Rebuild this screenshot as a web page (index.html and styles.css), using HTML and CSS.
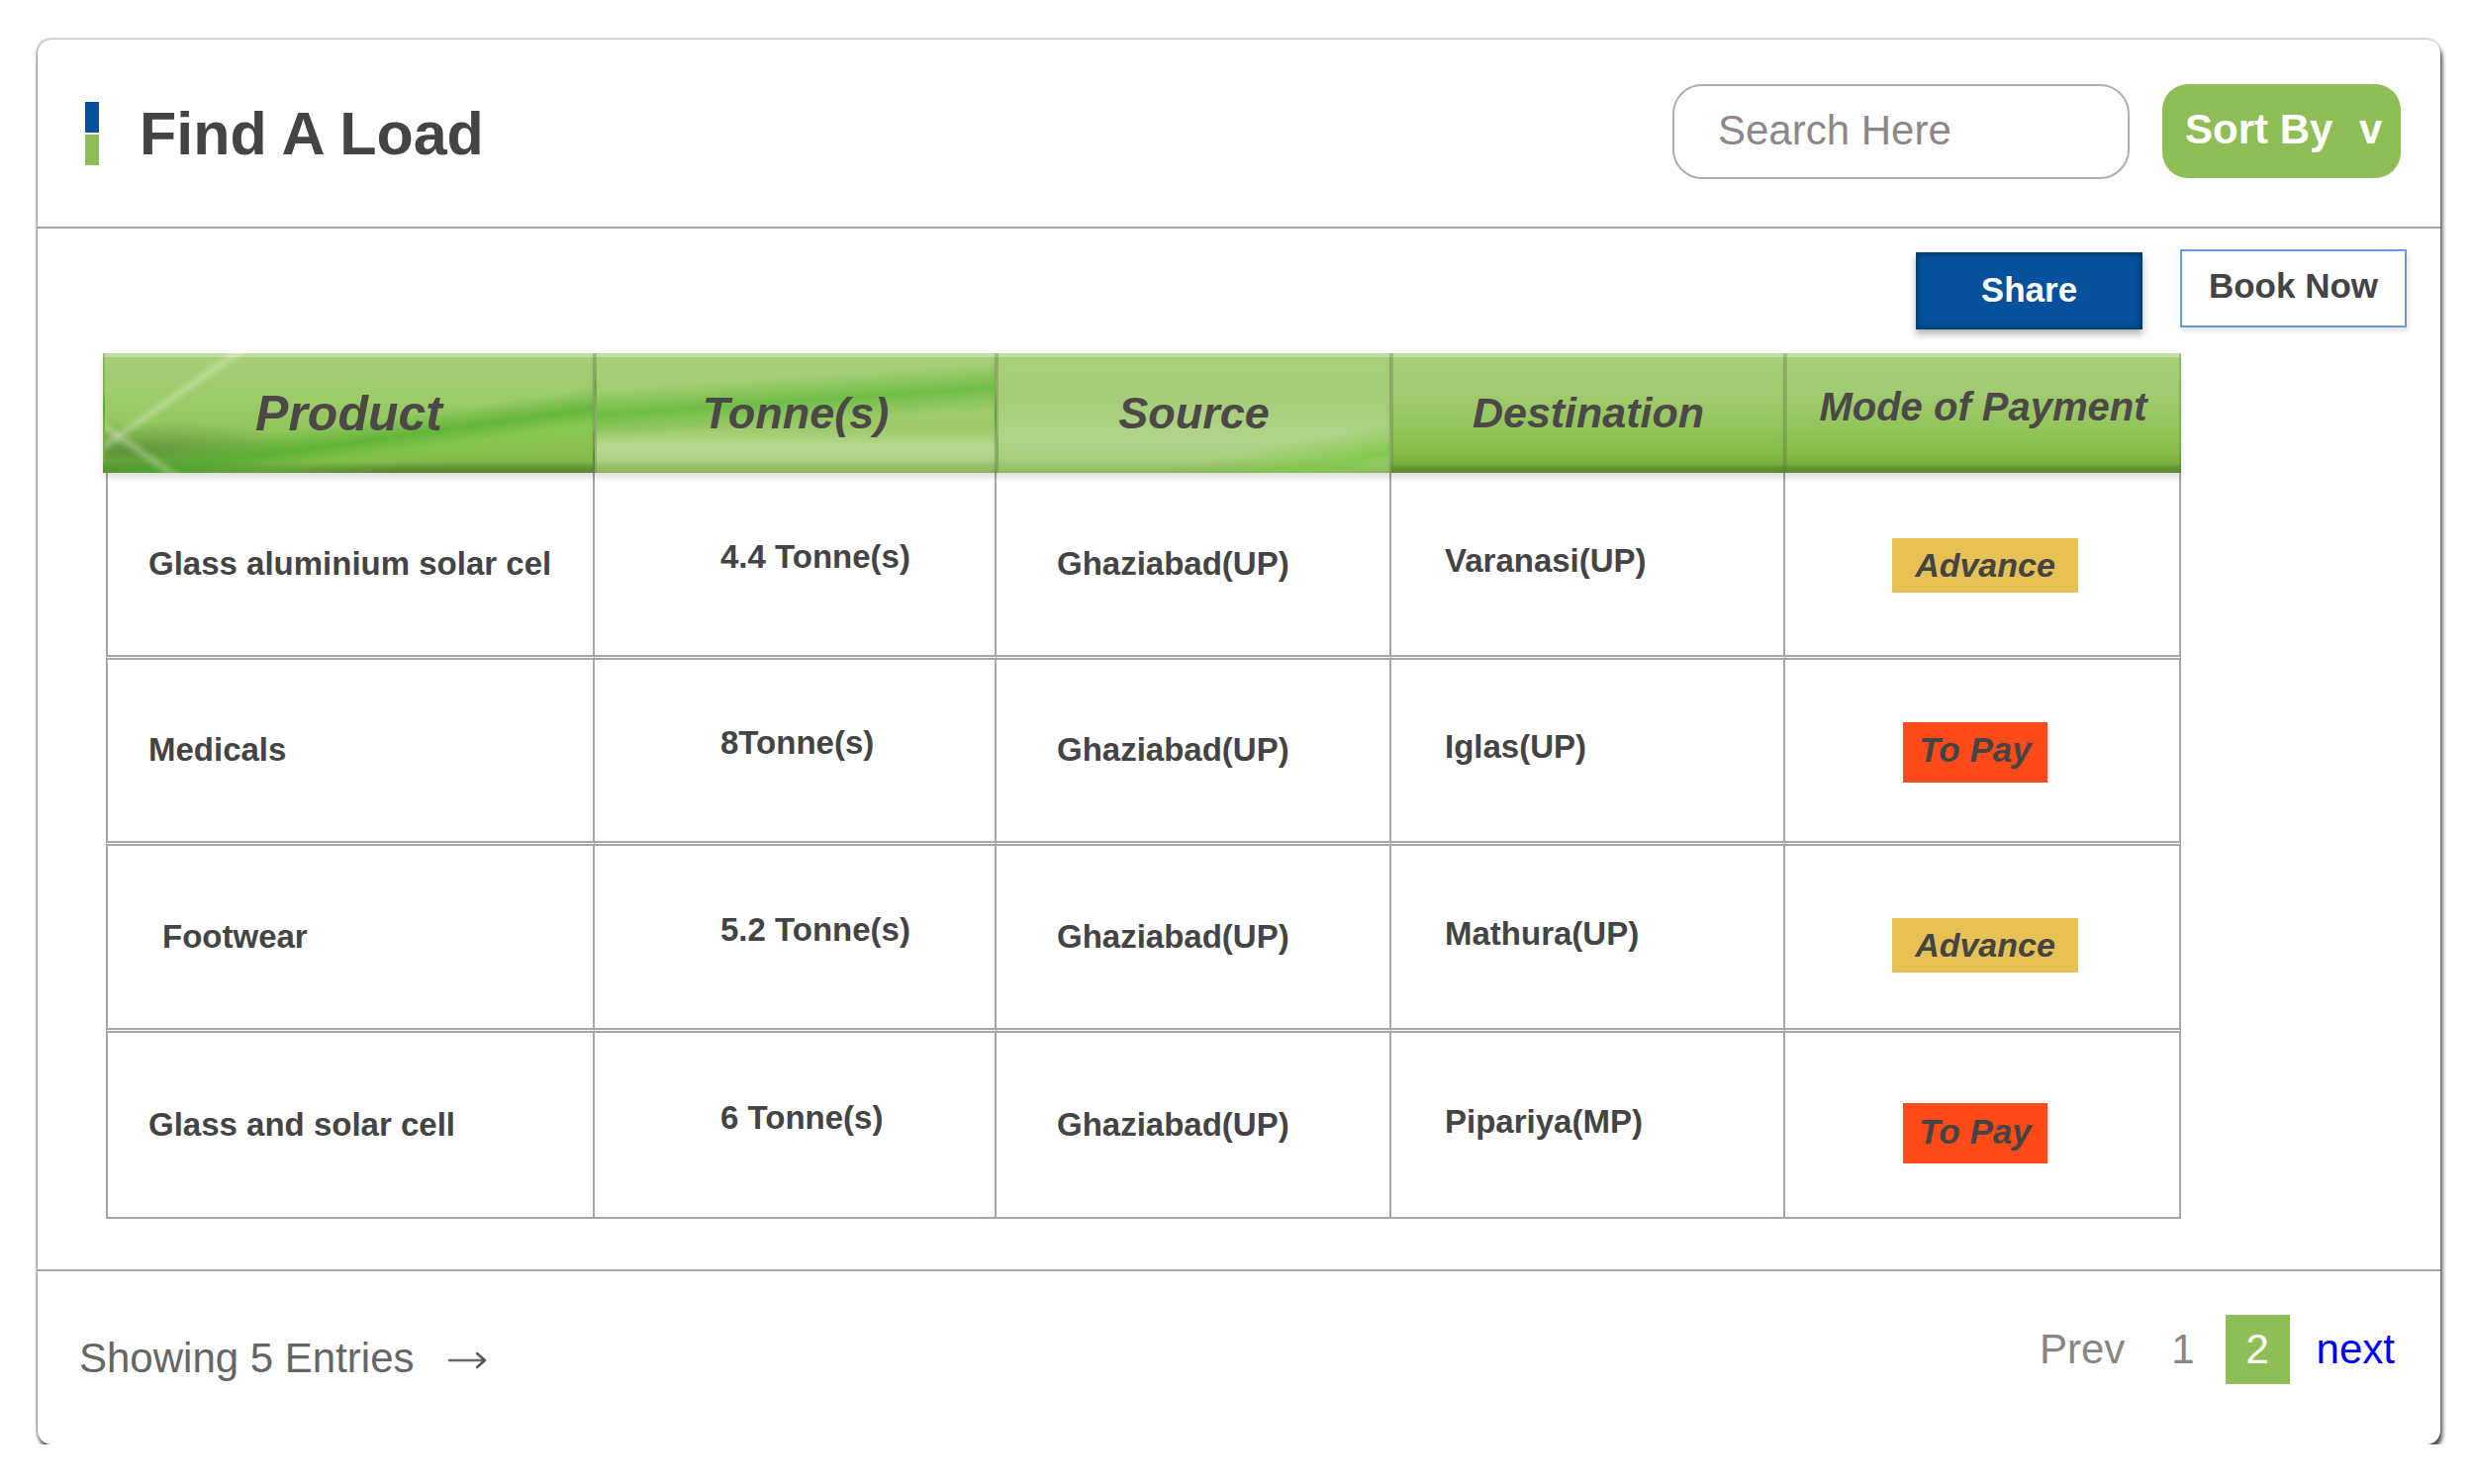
FILE: index.html
```html
<!DOCTYPE html>
<html lang="en">
<head>
<meta charset="utf-8">
<title>Find A Load</title>
<link rel="stylesheet" href="styles.css">
</head>
<body>
<div class="card">
  <header class="card-head">
    <h1 class="title"><span class="title-mark"><i class="mark-blue"></i><i class="mark-green"></i></span>Find A Load</h1>
    <div class="head-tools">
      <input class="search" type="text" placeholder="Search Here">
      <button class="sort" type="button">Sort By <span class="sort-caret">v</span></button>
    </div>
  </header>

  <section class="card-body">
    <div class="actions">
      <button class="btn-share" type="button">Share</button>
      <button class="btn-book" type="button">Book Now</button>
    </div>

    <div class="load-table">
      <div class="th th-product">Product</div>
      <div class="th th-tonne">Tonne(s)</div>
      <div class="th th-source">Source</div>
      <div class="th th-dest">Destination</div>
      <div class="th th-mode">Mode of Payment</div>

      <div class="td td-product">Glass aluminium solar cel</div>
      <div class="td td-tonne">4.4 Tonne(s)</div>
      <div class="td td-source">Ghaziabad(UP)</div>
      <div class="td td-dest">Varanasi(UP)</div>
      <div class="td td-mode"><span class="badge badge-advance">Advance</span></div>

      <div class="td td-product">Medicals</div>
      <div class="td td-tonne">8Tonne(s)</div>
      <div class="td td-source">Ghaziabad(UP)</div>
      <div class="td td-dest">Iglas(UP)</div>
      <div class="td td-mode"><span class="badge badge-topay">To Pay</span></div>

      <div class="td td-product td-indent">Footwear</div>
      <div class="td td-tonne">5.2 Tonne(s)</div>
      <div class="td td-source">Ghaziabad(UP)</div>
      <div class="td td-dest">Mathura(UP)</div>
      <div class="td td-mode td-low"><span class="badge badge-advance">Advance</span></div>

      <div class="td td-product td-last">Glass and solar cell</div>
      <div class="td td-tonne td-last">6 Tonne(s)</div>
      <div class="td td-source td-last">Ghaziabad(UP)</div>
      <div class="td td-dest td-last">Pipariya(MP)</div>
      <div class="td td-mode td-last td-low"><span class="badge badge-topay">To Pay</span></div>
    </div>
  </section>

  <footer class="card-foot">
    <div class="entries">Showing 5 Entries
      <svg class="entries-arrow" width="42" height="22" viewBox="0 0 42 22" aria-hidden="true">
        <path d="M2 11 H39" stroke="#666" stroke-width="2.5" fill="none"/>
        <path d="M31 4 L39 11 L31 18" stroke="#555" stroke-width="2.5" fill="none" stroke-linecap="round" stroke-linejoin="round"/>
      </svg>
    </div>
    <nav class="pager">
      <span class="pager-prev">Prev</span>
      <span class="pager-num">1</span>
      <span class="pager-current">2</span>
      <span class="pager-next">next</span>
    </nav>
  </footer>
</div>
</body>
</html>
```

FILE: styles.css
```css
* { box-sizing: border-box; }

html, body {
  margin: 0;
  padding: 0;
  background: #ffffff;
  font-family: "Liberation Sans", Arial, sans-serif;
}

body {
  padding: 40px 0 0 38px;
}

.card {
  width: 2428px;
  background: #fff;
  border-radius: 14px;
  box-shadow: 2px 5px 4px rgba(0, 0, 0, 0.7), -1px 0 3px rgba(0, 0, 0, 0.4), 0 -1px 3px rgba(0, 0, 0, 0.12);
  display: flex;
  flex-direction: column;
}

/* ---------- header ---------- */
.card-head {
  height: 191px;
  border-bottom: 2px solid #aca4a4;
  display: flex;
  align-items: center;
  justify-content: space-between;
  padding: 0 40px 0 48px;
}

.title {
  margin: 0;
  display: flex;
  align-items: center;
  font-size: 61px;
  font-weight: bold;
  color: #444;
}

.title-mark {
  display: flex;
  flex-direction: column;
  gap: 2px;
  margin-right: 41px;
}

.mark-blue, .mark-green {
  display: block;
  width: 14px;
  height: 31px;
}
.mark-blue { background: #06509c; }
.mark-green { background: #8fbe56; }

.head-tools {
  display: flex;
  align-items: center;
  gap: 33px;
  margin-top: -4px;
}

.search {
  width: 462px;
  height: 96px;
  border: 2px solid #b3adad;
  border-radius: 30px;
  padding: 0 0 2px 44px;
  font-family: "Liberation Sans", Arial, sans-serif;
  font-size: 42px;
  color: #555;
  outline: none;
  background: #fff;
}
.search::placeholder { color: #8d8787; }

.sort {
  width: 241px;
  height: 95px;
  border: none;
  border-radius: 26px;
  background: #8fbe56;
  color: #fff;
  font-family: "Liberation Sans", Arial, sans-serif;
  font-size: 42px;
  font-weight: bold;
  text-align: left;
  padding: 0 0 4px 23px;
}
.sort-caret { margin-left: 15px; }

/* ---------- body ---------- */
.card-body {
  padding: 21px 34px 51px 66px;
  border-bottom: 2px solid #aca4a4;
}

.actions {
  display: flex;
  justify-content: flex-end;
  align-items: flex-start;
  gap: 38px;
}

.btn-share {
  margin-top: 3px;
  width: 229px;
  height: 78px;
  border: 1px solid #043f7c;
  background: #06519b;
  color: #fff;
  font-family: "Liberation Sans", Arial, sans-serif;
  font-size: 35px;
  font-weight: bold;
  box-shadow: inset 0 0 6px rgba(0, 0, 0, 0.45), 0 5px 7px rgba(0, 0, 0, 0.3);
  padding: 0 0 2px;
}

.btn-book {
  width: 229px;
  height: 79px;
  border: 2px solid #6b98d6;
  background: #fff;
  color: #444;
  font-family: "Liberation Sans", Arial, sans-serif;
  font-size: 35px;
  font-weight: bold;
  box-shadow: 2px 4px 5px rgba(0, 0, 0, 0.1);
  padding: 0 0 6px;
}

.load-table {
  margin-top: 24px;
  width: 2100px;
  display: grid;
  grid-template-columns: 497px 406px 399px 398px 400px;
  grid-template-rows: 121px repeat(4, 188.5px);
}

/* header tiles */
.th {
  display: flex;
  align-items: center;
  justify-content: center;
  font-style: italic;
  font-weight: bold;
  font-size: 45px;
  color: #4c4848;
  border-left: 2px solid rgba(95, 125, 65, 0.35);
  border-right: 2px solid rgba(95, 125, 65, 0.35);
  box-shadow: 0 5px 6px rgba(0, 0, 0, 0.13);
  background:
    linear-gradient(to bottom, rgba(255, 255, 255, 0.3) 0, rgba(255, 255, 255, 0.3) 4px, transparent 4px),
    linear-gradient(to bottom, #a9d07d 0%, #a0cb6e 35%, #93c55b 62%, #85bd47 84%, #79b13f 92%, #61923a 96%, #5b8b33 100%);
  position: relative;
  z-index: 1;
}

.th-product {
  font-size: 50px;
  background:
    linear-gradient(to bottom, rgba(255, 255, 255, 0.3) 0, rgba(255, 255, 255, 0.3) 4px, transparent 4px),
    linear-gradient(35deg, transparent 8%, rgba(255, 255, 255, 0.25) 10%, transparent 12%),
    linear-gradient(-35deg, transparent 78%, rgba(255, 255, 255, 0.25) 80%, transparent 82%),
    linear-gradient(172deg, transparent 55%, rgba(80, 175, 45, 0.7) 66%, rgba(120, 200, 70, 0.4) 74%, transparent 84%),
    radial-gradient(ellipse 40% 25% at 5% 82%, rgba(60, 110, 40, 0.55), transparent),
    linear-gradient(to bottom, #a7cf78 0%, #9ccb69 40%, #8ec556 70%, #84bb4b 90%, #628f38 96%, #5a8a30 100%);
}

.th-tonne {
  background:
    linear-gradient(to bottom, rgba(255, 255, 255, 0.3) 0, rgba(255, 255, 255, 0.3) 4px, transparent 4px),
    linear-gradient(176deg, transparent 25%, rgba(95, 185, 55, 0.75) 42%, transparent 58%),
    linear-gradient(to bottom, transparent 62%, rgba(255, 255, 255, 0.25) 78%, transparent 95%),
    linear-gradient(to bottom, #a9d07d 0%, #a2cd70 40%, #9bc965 70%, #a6cf79 88%, #8ab35a 100%);
}

.th-source {
  background:
    linear-gradient(to bottom, rgba(255, 255, 255, 0.3) 0, rgba(255, 255, 255, 0.3) 4px, transparent 4px),
    linear-gradient(168deg, transparent 75%, rgba(125, 200, 70, 0.8) 90%, transparent 100%),
    linear-gradient(to bottom, #a8cf7b 0%, #a6ce78 40%, #b0d489 70%, #a9d07f 88%, #8eb85f 100%);
}

.th-dest { font-size: 43px; }

.th-mode {
  font-size: 40px;
  padding-bottom: 12px;
}

/* body cells */
.td {
  display: flex;
  align-items: center;
  font-size: 33px;
  font-weight: bold;
  color: #444;
  border-right: 2px solid #aba4a4;
  border-bottom: 5px double #aba4a4;
}

.td-product { border-left: 2px solid #aba4a4; padding-left: 41px; margin-left: 3px; }
.td-tonne { padding-left: 127px; padding-bottom: 14px; }
.td-source { padding-left: 61px; }
.td-dest { padding-left: 54px; padding-bottom: 6px; }
.td-mode { justify-content: center; }
.td-indent { padding-left: 55px; }
.td-low { padding-top: 14px; }
.td-last { border-bottom: 2px solid #aba4a4; }

.badge {
  display: inline-flex;
  align-items: center;
  justify-content: center;
  font-style: italic;
  font-weight: bold;
  color: #444;
}

.badge-advance {
  width: 188px;
  height: 55px;
  background: #e6c254;
  font-size: 34px;
  margin-left: 6px;
  margin-top: 4px;
}

.badge-topay {
  width: 146px;
  height: 61px;
  background: #ff4a1a;
  font-size: 35px;
  margin-right: 14px;
  margin-top: 4px;
  padding-bottom: 4px;
}

/* ---------- footer ---------- */
.card-foot {
  height: 175px;
  display: flex;
  align-items: center;
  justify-content: space-between;
  padding: 0 46px 0 42px;
}

.entries {
  display: flex;
  align-items: center;
  font-size: 42px;
  color: #666;
}

.entries-arrow {
  margin-left: 32px;
  margin-top: 4px;
}

.pager {
  display: flex;
  align-items: center;
  font-size: 42px;
  padding-bottom: 18px;
}

.pager-prev { color: #8a8484; }
.pager-num { color: #8a8484; margin-left: 47px; }

.pager-current {
  margin-left: 31px;
  width: 65px;
  height: 70px;
  background: #8fbe56;
  color: #fff;
  display: flex;
  align-items: center;
  justify-content: center;
}

.pager-next {
  margin-left: 27px;
  color: #0000ff;
}
```
